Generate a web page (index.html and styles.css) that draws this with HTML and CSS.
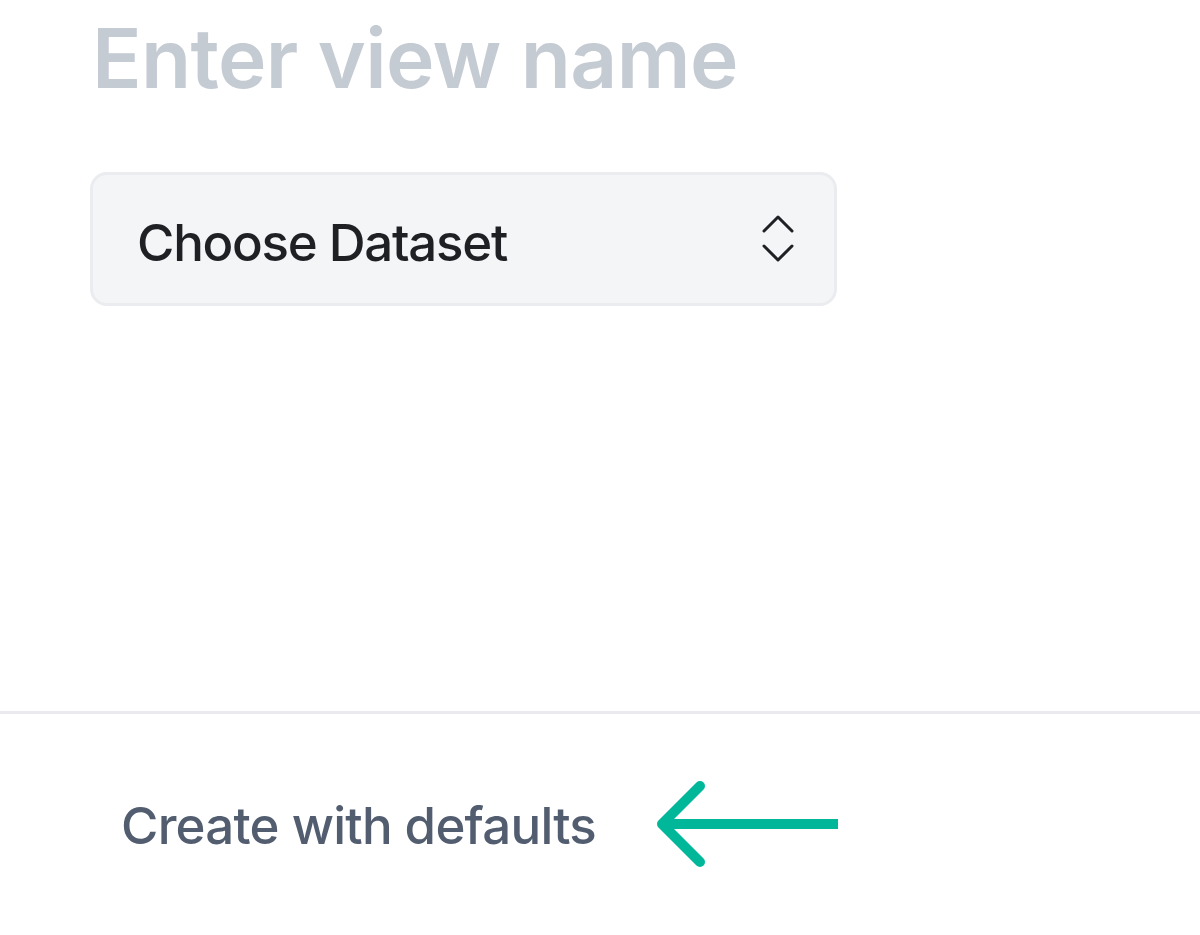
FILE: index.html
```html
<!DOCTYPE html>
<html lang="en">
<head>
    <meta charset="UTF-8">
    <title>New view</title>
    <link rel="stylesheet" href="styles.css">
</head>
<body>
    <div class="panel">
        <div class="panel-body">
            <input type="text" class="view-name" placeholder="Enter view name">
            <button class="dataset-select" type="button">
                <span>Choose Dataset</span>
                <svg class="chevrons" width="34" height="48" viewBox="0 0 34 48" fill="none" stroke="#1f2024" stroke-width="3" stroke-linecap="round" stroke-linejoin="round">
                    <path d="M3 16 L17 2 L31 16"/>
                    <path d="M3 31 L17 45 L31 31"/>
                </svg>
            </button>
        </div>
        <div class="panel-footer">
            <a href="#" class="defaults-link">Create with defaults</a>
            <!-- pointer toward the link -->
            <svg class="hint-arrow" width="184" height="86" viewBox="0 0 184 86" fill="none" stroke="#00b899" stroke-width="10" stroke-linejoin="round">
                <path d="M8 43 H184"/>
                <path d="M46 5 L8 43 L46 81" stroke-linecap="round"/>
            </svg>
        </div>
    </div>
</body>
</html>
```

FILE: styles.css
```css
body {
    font-family: Inter, 'Noto Sans', sans-serif;
    background: #fff;
    margin: 0;
    padding: 0;
}
.panel {
    display: flex;
    flex-direction: column;
    height: 935px;
}
.panel-body {
    padding: 9px 0 0 90px;
    height: 711px;
    box-sizing: border-box;
}
.view-name {
    display: block;
    border: none;
    outline: none;
    padding: 0 0 0 2px;
    margin: 0 0 64px 0;
    font-family: inherit;
    font-size: 82px;
    font-weight: 600;
    letter-spacing: -0.008em;
    color: #1f2024;
    width: 900px;
    background: transparent;
}
.view-name::placeholder {
    color: #c5cbd3;
}
.dataset-select {
    display: flex;
    align-items: center;
    justify-content: space-between;
    width: 747px;
    height: 134px;
    box-sizing: border-box;
    padding: 6px 39px 0 44px;
    background: #f4f5f7;
    border: 3px solid #ebecef;
    border-radius: 17px;
    font-family: inherit;
    font-size: 51px;
    font-weight: 500;
    letter-spacing: -0.025em;
    color: #1f2024;
    cursor: pointer;
}
.chevrons {
    margin-top: -6px;
}
.panel-footer {
    border-top: 3px solid #ebebef;
    display: flex;
    align-items: center;
    padding: 70px 0 0 121px;
    gap: 58px;
}
.defaults-link {
    font-size: 51px;
    font-weight: 500;
    letter-spacing: -0.015em;
    color: #525e70;
    text-decoration: none;
}
.hint-arrow {
    margin-top: -3px;
}
```
